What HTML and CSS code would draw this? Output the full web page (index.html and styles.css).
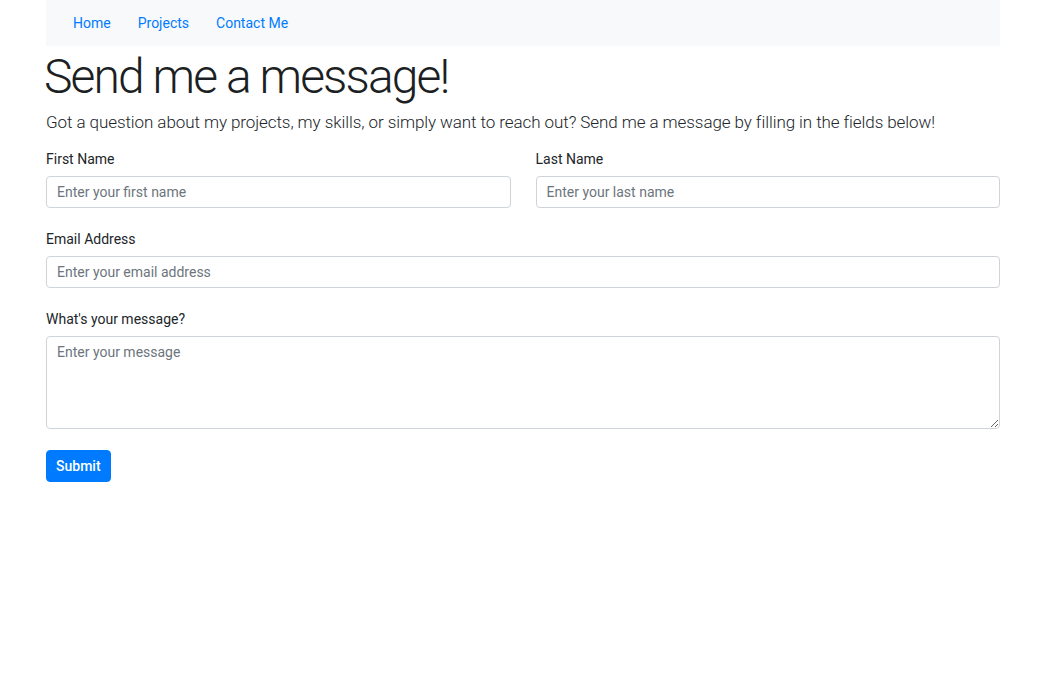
FILE: index.html
```html
<!DOCTYPE html>
<html lang="en">
<head>
<meta charset="utf-8">
<title>Contact Me</title>
<link rel="stylesheet" href="styles.css">
</head>
<body>
<div class="container">
  <nav class="navbar">
    <a class="nav-link" href="#">Home</a>
    <a class="nav-link" href="#">Projects</a>
    <a class="nav-link" href="#">Contact Me</a>
  </nav>
  <h1 class="title">Send me a message!</h1>
  <p class="lead">Got a question about my projects, my skills, or simply want to reach out? Send me a message by filling in the fields below!</p>
  <form class="form">
    <div class="row">
      <div class="group">
        <label class="label" for="first">First Name</label>
        <input class="control" id="first" type="text" placeholder="Enter your first name">
      </div>
      <div class="group">
        <label class="label" for="last">Last Name</label>
        <input class="control" id="last" type="text" placeholder="Enter your last name">
      </div>
    </div>
    <div class="group">
      <label class="label" for="email">Email Address</label>
      <input class="control" id="email" type="email" placeholder="Enter your email address">
    </div>
    <div class="group">
      <label class="label" for="msg">What's your message?</label>
      <textarea class="control area" id="msg" placeholder="Enter your message"></textarea>
    </div>
    <button class="btn" type="submit">Submit</button>
  </form>
</div>
</body>
</html>
```

FILE: styles.css
```css
* { box-sizing: border-box; }
html, body { margin: 0; padding: 0; background: #fff; }
body {
  font-family: Roboto, "Liberation Sans", sans-serif;
  color: #212529;
  font-size: 14px;
  line-height: 1.5;
}
.container {
  margin-left: 46px;
  width: 954px;
}
.navbar {
  background: #f8f9fa;
  height: 46px;
  display: flex;
  align-items: center;
  gap: 27px;
  padding-left: 27px;
}
.nav-link {
  color: #007bff;
  text-decoration: none;
  font-size: 14px;
}
.title {
  font-size: 48px;
  font-weight: 300;
  line-height: 1.2;
  margin: 2px 0 0 -2px;
  letter-spacing: -1.9px;
  color: #1c1f23;
}
.lead {
  font-size: 17px;
  font-weight: 300;
  margin: 4px 0 0;
  line-height: 1.5;
  letter-spacing: -0.08px;
}
.form { margin-top: 14px; }
.row {
  display: grid;
  grid-template-columns: 1fr 1fr;
  gap: 25px;
}
.group {
  display: flex;
  flex-direction: column;
  margin-bottom: 21px;
}
.label {
  font-size: 14px;
  line-height: 21px;
  margin-bottom: 6px;
}
.control {
  font-family: inherit;
  font-size: 14px;
  color: #495057;
  height: 32px;
  padding: 5px 10px;
  border: 1px solid #ced4da;
  border-radius: 4px;
  background: #fff;
  width: 100%;
}
.control::placeholder { color: #6c757d; }
.area {
  height: 93px;
  resize: vertical;
  padding-top: 7px;
}
.btn {
  margin-top: 0;
  background: #007bff;
  color: #fff;
  border: 1px solid #007bff;
  border-radius: 4px;
  font-family: inherit;
  font-size: 14px;
  font-weight: 500;
  height: 32px;
  padding: 0 9px;
}
```
